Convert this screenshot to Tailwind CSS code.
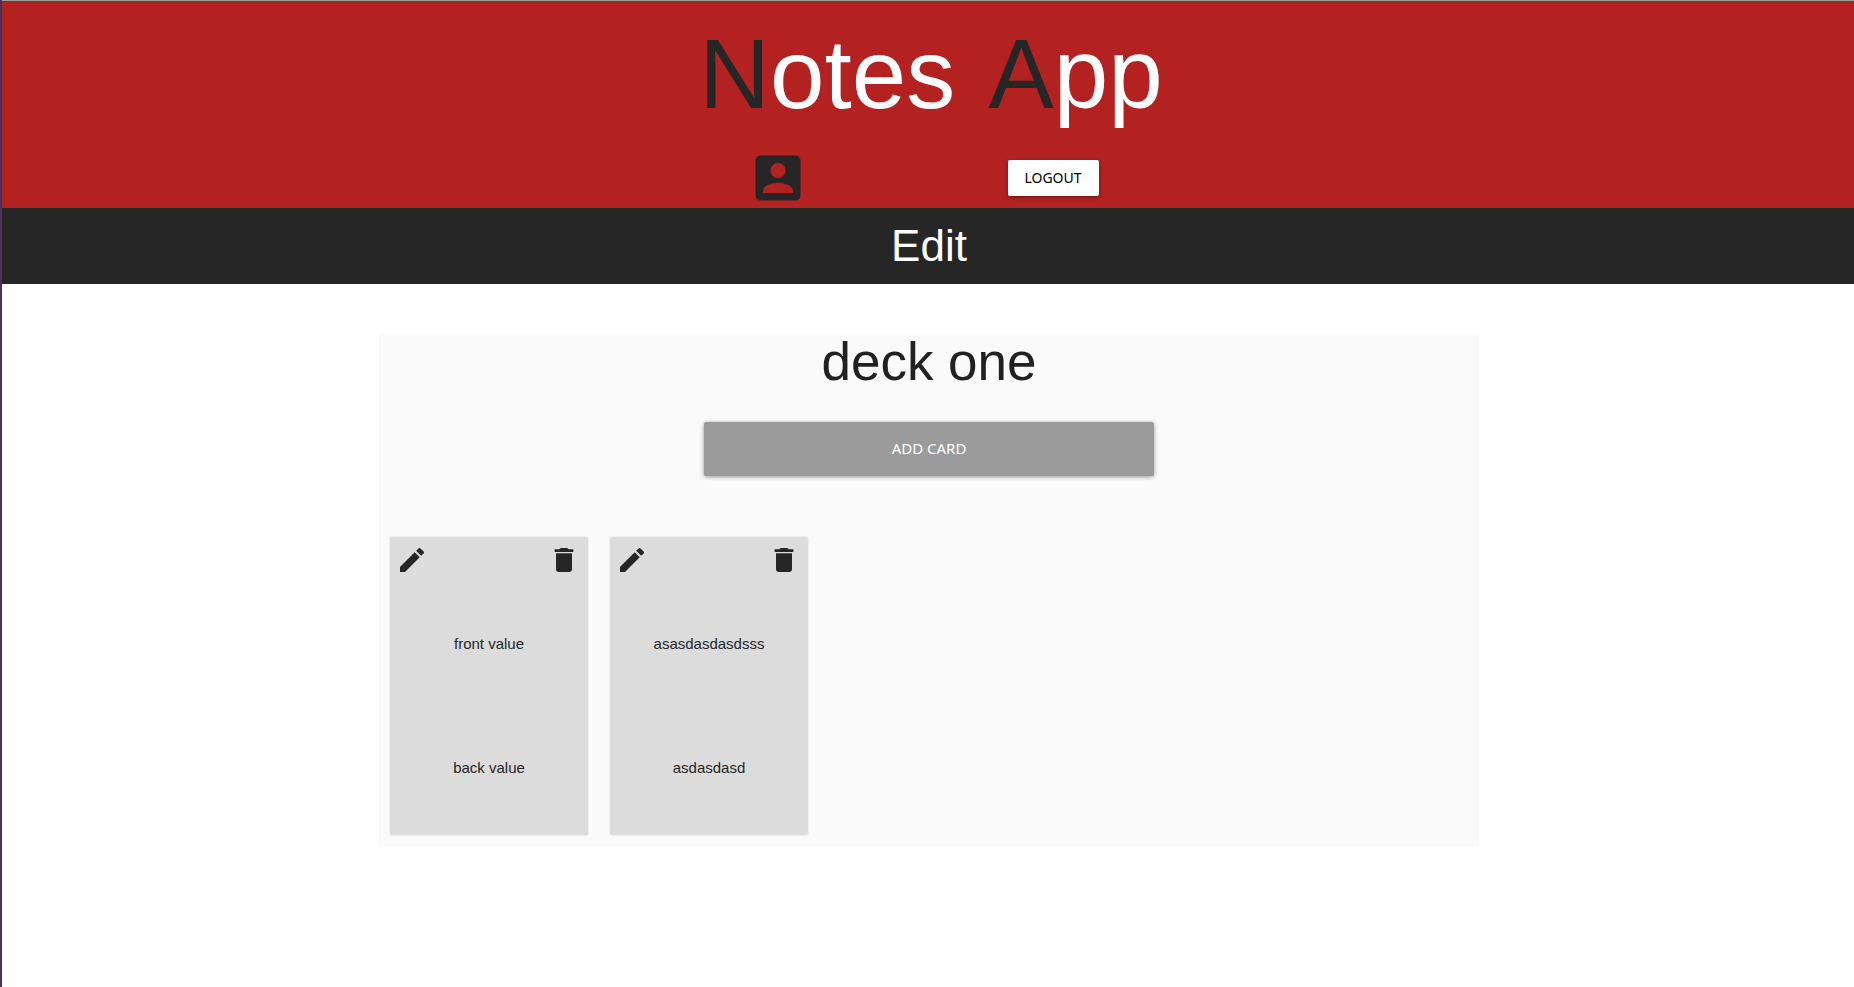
<!DOCTYPE html>
<html lang="en">
<head>
<meta charset="utf-8">
<meta name="viewport" content="width=device-width, initial-scale=1">
<title>Notes App</title>
<script src="https://cdn.jsdelivr.net/npm/@tailwindcss/browser@4"></script>
</head>
<body class="min-h-screen border-l-2 border-[#4b3358] bg-white font-['Liberation_Sans',Arial,sans-serif] text-[#262626]">
  <header class="border-t border-[#9e9e9e] bg-[#b42121] pl-0.5">
    <h1 class="pt-4 pl-1 text-center text-[98px] leading-[114px] text-white [font-kerning:none]"><span class="text-[#262626]">N</span>otes <span class="ml-1.5 text-[#262626]">A</span>pp</h1>
    <nav class="mt-[17px] flex items-center justify-center gap-[200px] pr-3">
      <a href="#account" aria-label="Account">
        <svg class="size-[60px]" viewBox="0 0 24 24" fill="#262626"><path d="M3 5v14c0 1.1.89 2 2 2h14c1.1 0 2-.9 2-2V5c0-1.1-.9-2-2-2H5c-1.11 0-2 .9-2 2zm12 4c0 1.66-1.34 3-3 3s-3-1.34-3-3 1.34-3 3-3 3 1.34 3 3zm-9 8c0-2 4-3.1 6-3.1s6 1.1 6 3.1v1H6v-1z"/></svg>
      </a>
      <button type="button" class="h-9 w-[91px] rounded-xs bg-white font-['Noto_Sans',sans-serif] text-sm text-black shadow-[0_1px_4px_rgba(0,0,0,0.4)]">LOGOUT</button>
    </nav>
  </header>
  <div class="bg-[#262626] py-3 pl-0.5">
    <h2 class="text-center text-[44px] leading-[52px] text-white">Edit</h2>
  </div>
  <main class="mt-[50px] pl-0.5">
    <section class="mx-auto max-w-[1100px] bg-[#fafafa] pb-[11px]">
      <h3 class="text-center text-[53px] leading-[56px] text-[#212121]">deck one</h3>
      <div class="flex justify-center pt-8">
        <button type="button" class="h-[54px] w-[450px] rounded-xs bg-[#9b9b9b] pb-0.5 font-['Noto_Sans',sans-serif] text-[15px] text-white shadow-[0_1px_4px_rgba(0,0,0,0.4)]">ADD CARD</button>
      </div>
      <ul class="mt-[61px] flex flex-wrap gap-[22px] px-[11px]">
        <li class="flex h-[298px] w-[198px] flex-col rounded-xs bg-[#dcdcdc] px-1.5 pt-[7px] text-center text-[15px] leading-5 shadow-[0_0_1px_1px_rgba(0,0,0,0.05)]">
          <div class="flex justify-between pr-0.5">
            <button type="button" aria-label="Edit card"><svg class="size-8" viewBox="0 0 24 24" fill="#262626"><path d="M3 17.25V21h3.75L17.81 9.94l-3.75-3.75L3 17.25zM20.71 7.04c.39-.39.39-1.02 0-1.41l-2.34-2.34a.9959.9959 0 0 0-1.41 0l-1.83 1.83 3.75 3.75 1.83-1.83z"/></svg></button>
            <button type="button" aria-label="Delete card"><svg class="size-8" viewBox="0 0 24 24" fill="#262626"><path d="M6 19c0 1.1.9 2 2 2h8c1.1 0 2-.9 2-2V7H6v12zM19 4h-3.5l-1-1h-5l-1 1H5v2h14V4z"/></svg></button>
          </div>
          <p class="mt-[58px]">front value</p>
          <p class="mt-[104px]">back value</p>
        </li>
        <li class="flex h-[298px] w-[198px] flex-col rounded-xs bg-[#dcdcdc] px-1.5 pt-[7px] text-center text-[15px] leading-5 shadow-[0_0_1px_1px_rgba(0,0,0,0.05)]">
          <div class="flex justify-between pr-0.5">
            <button type="button" aria-label="Edit card"><svg class="size-8" viewBox="0 0 24 24" fill="#262626"><path d="M3 17.25V21h3.75L17.81 9.94l-3.75-3.75L3 17.25zM20.71 7.04c.39-.39.39-1.02 0-1.41l-2.34-2.34a.9959.9959 0 0 0-1.41 0l-1.83 1.83 3.75 3.75 1.83-1.83z"/></svg></button>
            <button type="button" aria-label="Delete card"><svg class="size-8" viewBox="0 0 24 24" fill="#262626"><path d="M6 19c0 1.1.9 2 2 2h8c1.1 0 2-.9 2-2V7H6v12zM19 4h-3.5l-1-1h-5l-1 1H5v2h14V4z"/></svg></button>
          </div>
          <p class="mt-[58px]">asasdasdasdsss</p>
          <p class="mt-[104px]">asdasdasd</p>
        </li>
      </ul>
    </section>
  </main>
</body>
</html>
